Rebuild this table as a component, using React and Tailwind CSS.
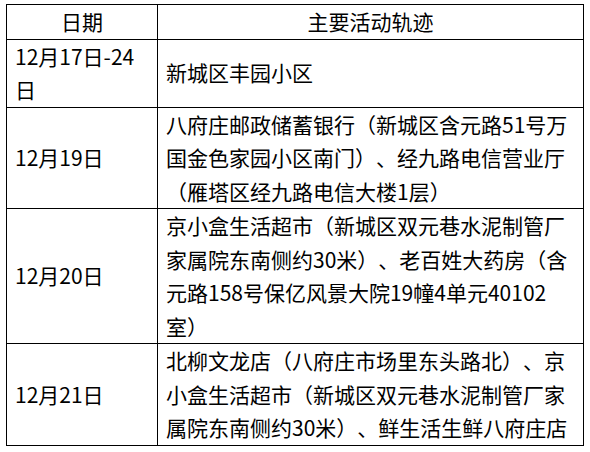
const rows = [
  { date: ['12月17日-24', '日'], text: ['新城区丰园小区'] },
  {
    date: ['12月19日'],
    text: [
      '八府庄邮政储蓄银行（新城区含元路51号万',
      '国金色家园小区南门）、经九路电信营业厅',
      '（雁塔区经九路电信大楼1层）',
    ],
  },
  {
    date: ['12月20日'],
    text: [
      '京小盒生活超市（新城区双元巷水泥制管厂',
      '家属院东南侧约30米）、老百姓大药房（含',
      '元路158号保亿风景大院19幢4单元40102',
      '室）',
    ],
  },
  {
    date: ['12月21日'],
    text: [
      '北柳文龙店（八府庄市场里东头路北）、京',
      '小盒生活超市（新城区双元巷水泥制管厂家',
      '属院东南侧约30米）、鲜生活生鲜八府庄店',
    ],
  },
];

const Lines = ({ lines }) =>
  lines.map((l, i) => (
    <div key={i} className="whitespace-nowrap">
      {l}
    </div>
  ));

export default function App() {
  return (
    <div
      className="w-[590px] h-[452px] bg-white pl-[6px] pt-[4px] text-black [text-spacing-trim:space-all]"
      style={{ fontFamily: '"Noto Sans CJK SC", "Noto Sans", sans-serif' }}
    >
      <table className="border-collapse w-[578px] table-fixed text-[21px] leading-[33.5px]">
        <colgroup>
          <col className="w-[151px]" />
          <col />
        </colgroup>
        <thead>
          <tr>
            <th className="border border-black font-normal text-center p-0">日期</th>
            <th className="border border-black font-normal text-center p-0">主要活动轨迹</th>
          </tr>
        </thead>
        <tbody>
          {rows.map((r, i) => (
            <tr key={i}>
              <td className="border border-black align-middle pl-[8px] p-0">
                <Lines lines={r.date} />
              </td>
              <td className="border border-black align-middle pl-[8px] p-0">
                <Lines lines={r.text} />
              </td>
            </tr>
          ))}
        </tbody>
      </table>
    </div>
  );
}
